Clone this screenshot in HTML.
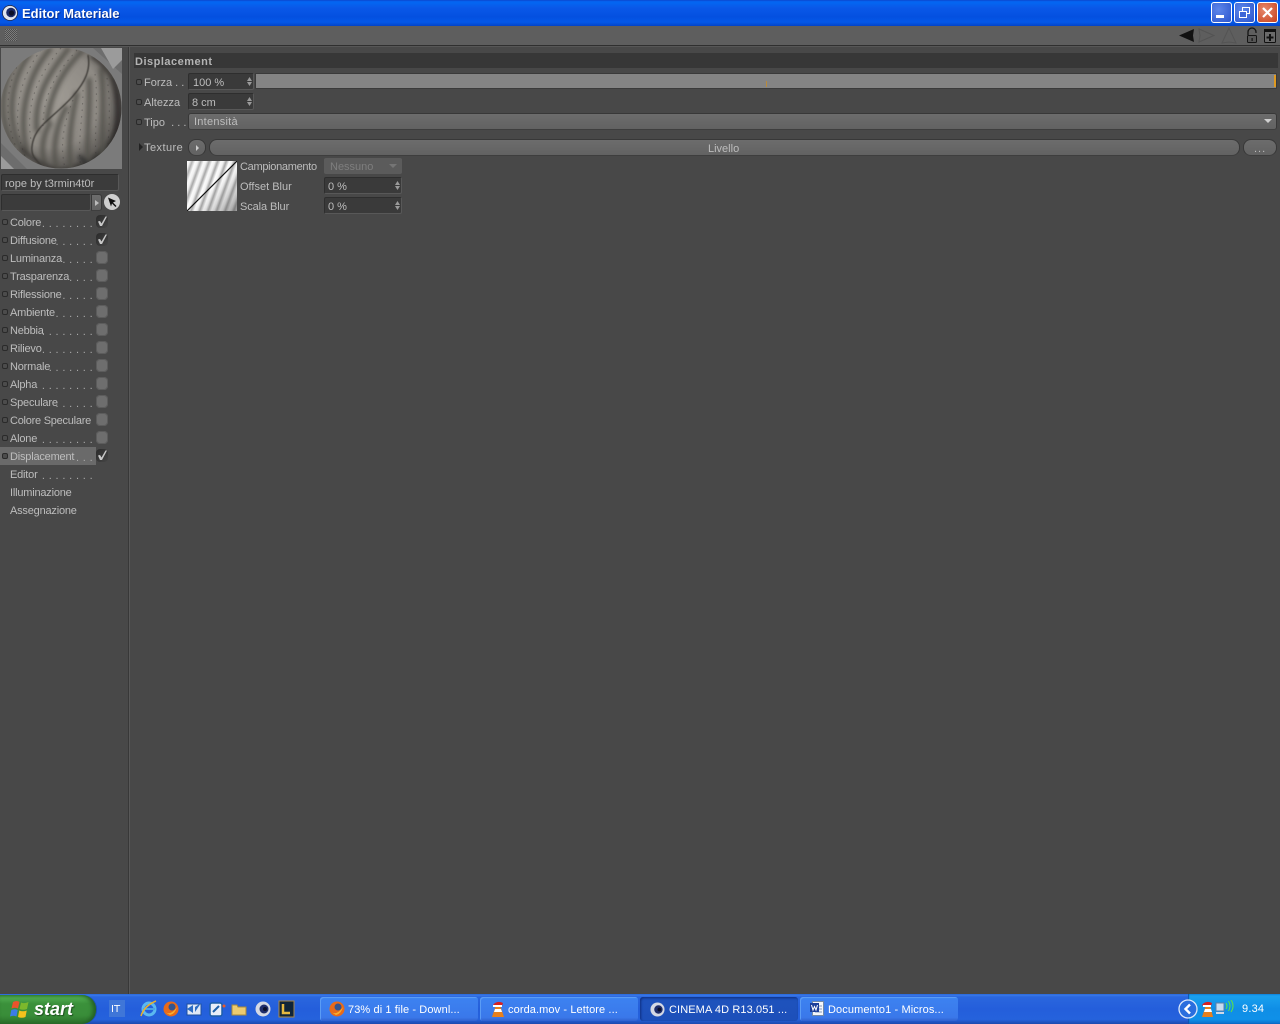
<!DOCTYPE html>
<html><head><meta charset="utf-8"><title>Editor Materiale</title>
<style>
html,body{margin:0;padding:0;width:1280px;height:1024px;overflow:hidden;background:#484848}
body{position:relative;font-family:"Liberation Sans",sans-serif;font-size:11px;color:#bdbdbd}
.a{position:absolute}
.t{position:absolute;white-space:pre;line-height:14px;height:14px;margin-top:1px}
.l{letter-spacing:-.2px}
.d{position:absolute;left:10px;width:83px;text-align:right;white-space:pre;line-height:14px;height:14px;margin-top:2px;letter-spacing:.35px;color:#aaa}
.dot{position:absolute;width:4px;height:4px;border:1px solid #2a2a2a;border-radius:2px;background:#4c4c4c}
.cb{position:absolute;left:96px;width:12px;height:13px;border-radius:4px;background:#6e6e6e;box-shadow:inset 0 0 0 1px #5c5c5c}
.cb.on{background:linear-gradient(135deg,#2a2a2a,#454545);box-shadow:none}
.cb.on svg{position:absolute;left:0;top:0}
.num{position:absolute;background:#3a3a3a;border:1px solid #2e2e2e;border-right-color:#585858;border-bottom-color:#585858;border-radius:2px;box-sizing:border-box}
.btn{position:absolute;box-sizing:border-box;background:linear-gradient(#6c6c6c,#626262);border:1px solid #383838;border-bottom-color:#3e3e3e}
.spin{position:absolute;width:5px;height:9px}
.tb{position:absolute;top:997px;height:24px;border-radius:3px;background:linear-gradient(#3f8cf3 0,#3c81f0 12%,#3a78ea 85%,#2f62cf 100%);box-sizing:border-box;color:#fff;font-size:11px;letter-spacing:.1px;line-height:24px;white-space:pre;box-shadow:inset 1px 1px 0 #5b9cf5}
.tb span{position:absolute;top:1px}
.tb svg{position:absolute}
</style></head><body>

<!-- title bar -->
<div class="a" style="left:0;top:0;width:1280px;height:26px;background:linear-gradient(#0a5ae6 0,#0466f2 10%,#0a58e8 30%,#0450e0 65%,#0458e8 85%,#0344c8 100%)"></div>
<div class="a" style="left:0;top:0;width:1280px;height:1px;background:#0a4fd8"></div>
<svg class="a" style="left:2px;top:5px" width="16" height="16" viewBox="0 0 16 16"><circle cx="8" cy="8" r="7.500" fill="#dfe4ee"/><circle cx="8" cy="8" r="7.500" fill="none" stroke="#223" stroke-width=".7"/><circle cx="9" cy="7.500" r="4.800" fill="#1b2a66"/><circle cx="9.500" cy="8" r="2.600" fill="#0b0f28"/></svg>
<div class="t" style="left:22px;top:5px;height:16px;line-height:16px;font-size:13px;font-weight:bold;color:#fff;text-shadow:1px 1px 0 #0a2f8f">Editor Materiale</div>
<!-- window buttons -->
<div class="a" style="left:1211px;top:2px;width:21px;height:21px;box-sizing:border-box;border:1px solid #fff;border-radius:3px;background:radial-gradient(circle at 35% 35%,#5d86ea,#2b55cd)"></div>
<div class="a" style="left:1216px;top:15px;width:8px;height:3px;background:#fff"></div>
<div class="a" style="left:1234px;top:2px;width:21px;height:21px;box-sizing:border-box;border:1px solid #fff;border-radius:3px;background:radial-gradient(circle at 35% 35%,#5d86ea,#2b55cd)"></div>
<svg class="a" style="left:1238px;top:6px" width="13" height="13" viewBox="0 0 13 13" fill="none" stroke="#fff"><rect x="4.500" y="1.500" width="7" height="6"/><rect x="1.500" y="5.500" width="7" height="6" fill="#3d66d8"/><path d="M1 5.500h8M4 1.500h8"/></svg>
<div class="a" style="left:1257px;top:2px;width:21px;height:21px;box-sizing:border-box;border:1px solid #fff;border-radius:3px;background:radial-gradient(circle at 35% 35%,#e6896c,#c8401c)"></div>
<svg class="a" style="left:1261px;top:6px" width="13" height="13" viewBox="0 0 13 13"><path d="M2 2l9 9M11 2l-9 9" stroke="#fff" stroke-width="2.200"/></svg>

<!-- toolbar -->
<div class="a" style="left:0;top:26px;width:1280px;height:19px;background:#5e5e5e"></div>
<div class="a" style="left:0;top:45px;width:1280px;height:1px;background:#2f2f2f"></div>
<div class="a" style="left:0;top:46px;width:1280px;height:1px;background:#565656"></div>
<div class="a" style="left:5px;top:29px;width:12px;height:12px;background-image:repeating-conic-gradient(#7c7c7c 0 25%,#4c4c4c 0 50%);background-size:2px 2px"></div>
<svg class="a" style="left:1176px;top:26px" width="104" height="19" viewBox="0 0 104 19">
<path d="M3 9.500L18 3L17 9.500L18 16Z" fill="#111"/>
<path d="M38 9.500L23 3L24 9.500L23 16Z" fill="#5e5e5e" stroke="#535353"/>
<path d="M53 2L46 17L53 16L60 17Z" fill="#5e5e5e" stroke="#545454"/>
<path d="M72 9V6a4 4 0 0 1 8 0v1" fill="none" stroke="#151515" stroke-width="1.300"/><rect x="71.500" y="9.500" width="9" height="7" rx="1" fill="#565656" stroke="#151515"/><rect x="75.500" y="12" width="1.200" height="3" fill="#151515"/>
<rect x="88.500" y="3.500" width="11" height="13" rx="1" fill="#6a6a6a" stroke="#111"/><rect x="88" y="3" width="12" height="3" fill="#111"/><path d="M94 8v7M90.500 11.500h7" stroke="#111" stroke-width="2"/>
</svg>

<!-- divider between sidebar and content -->
<div class="a" style="left:128px;top:47px;width:1px;height:948px;background:#383838"></div>
<div class="a" style="left:129px;top:47px;width:1px;height:948px;background:#585858"></div>

<!-- preview -->
<svg class="a" style="left:1px;top:48px" width="121" height="121" viewBox="0 0 121 121">
<defs>
<radialGradient id="sph" cx=".42" cy=".42" r=".62"><stop offset="0" stop-color="#a09c95"/><stop offset=".65" stop-color="#8e8a84"/><stop offset=".9" stop-color="#625f5b"/><stop offset="1" stop-color="#302f2c"/></radialGradient>
<clipPath id="c"><circle cx="60" cy="60" r="60.500"/></clipPath>
<filter id="bl" x="-30%" y="-30%" width="160%" height="160%"><feGaussianBlur stdDeviation="2"/></filter>
<filter id="bs"><feGaussianBlur stdDeviation=".4"/></filter>
</defs>
<rect width="121" height="121" fill="#7b7b7b"/>
<path d="M92 0H121L121 26ZM0 95L26 121H0Z" fill="#6d6d6d"/>
<path d="M100 0L121 0V12L112 21ZM0 108L13 121H0Z" fill="#9b9b9b"/>
<circle cx="60" cy="60" r="60.500" fill="url(#sph)"/>
<g clip-path="url(#c)">
<g filter="url(#bl)" fill="none" stroke="#55524e" stroke-width="5" opacity=".9">
<path d="M14 14C2 35 -4 65 12 100"/>
<path d="M30 4C10 30 2 70 24 110"/>
<path d="M50 0C28 25 16 65 26 104"/>
<path d="M68 0C48 25 32 50 36 84"/>
<path d="M82 2C64 20 50 42 46 74"/>
<path d="M76 44C72 65 66 90 70 122"/>
<path d="M66 58C56 75 50 100 56 122"/>
<path d="M50 74C42 85 38 105 46 120"/>
<path d="M88 30C90 60 84 95 88 122"/>
<path d="M100 20C104 50 100 90 102 115"/>
<path d="M112 30C120 50 118 85 110 108" stroke="#2e2c2a" stroke-width="6"/>
<path d="M90 8C102 14 112 28 118 45" stroke="#35332f" stroke-width="4"/>
<path d="M20 100C36 116 48 120 60 124" stroke="#3a3835" stroke-width="4"/>
<path d="M78 108C84 114 92 120 100 124" stroke="#333" stroke-width="5"/>
</g>
<path d="M87 7C90 22 84 34 72 48C60 62 42 74 36 84C31 92 29 103 33 109C36 113 39 117 44 120" fill="none" stroke="#3a3834" stroke-width="1.300" filter="url(#bs)"/>
<g fill="none" stroke="#2c2a28" stroke-width="1" stroke-dasharray="1.500 5" opacity=".35">
<path d="M22 8C6 32 0 68 18 106"/><path d="M40 2C20 28 8 68 24 108"/><path d="M60 0C38 26 24 55 30 92"/><path d="M76 2C56 24 42 46 42 78"/><path d="M72 52C64 72 58 95 64 120"/><path d="M82 42C82 70 76 95 80 120"/><path d="M94 26C98 55 92 90 96 118"/><path d="M106 30C110 55 108 85 106 110"/>
</g>
</g>
</svg>

<!-- material name -->
<div class="num" style="left:1px;top:174px;width:118px;height:17px;background:#3b3b3b"></div>
<div class="t" style="left:5px;top:176px">rope by t3rmin4t0r</div>
<div class="num" style="left:1px;top:194px;width:90px;height:17px;background:#3b3b3b"></div>
<div class="btn" style="left:91px;top:194px;width:11px;height:17px;border-radius:0 3px 3px 0"></div>
<div class="a" style="left:95px;top:200px;border-left:4px solid #bbb;border-top:3px solid transparent;border-bottom:3px solid transparent"></div>
<svg class="a" style="left:103px;top:193px" width="18" height="18" viewBox="0 0 18 18"><circle cx="9" cy="9" r="8" fill="#cfcfcf"/><path d="M5 4.500L13 8L10 9.500L13.500 13L12.500 14L9 10.500L8 13.500Z" fill="#111"/></svg>

<!-- channel list -->
<div class="a" style="left:0;top:447px;width:96px;height:18px;background:#6a6a6a"></div>

<i class="dot" style="left:2px;top:219px"></i><div class="t l" style="left:10px;top:215px">Colore</div><div class="d" style="top:215px">. . . . . . . .</div><div class="cb on" style="top:215px"><svg width="12" height="13"><path d="M2 6.500L4 6L5.500 8.500L9.500 1.500H11L6 11H4Z" fill="#c8c8c8"/></svg></div>
<i class="dot" style="left:2px;top:237px"></i><div class="t l" style="left:10px;top:233px">Diffusione</div><div class="d" style="top:233px">. . . . . .</div><div class="cb on" style="top:233px"><svg width="12" height="13"><path d="M2 6.500L4 6L5.500 8.500L9.500 1.500H11L6 11H4Z" fill="#c8c8c8"/></svg></div>
<i class="dot" style="left:2px;top:255px"></i><div class="t l" style="left:10px;top:251px">Luminanza</div><div class="d" style="top:251px">. . . . .</div><div class="cb" style="top:251px"></div>
<i class="dot" style="left:2px;top:273px"></i><div class="t l" style="left:10px;top:269px">Trasparenza</div><div class="d" style="top:269px">. . . .</div><div class="cb" style="top:269px"></div>
<i class="dot" style="left:2px;top:291px"></i><div class="t l" style="left:10px;top:287px">Riflessione</div><div class="d" style="top:287px">. . . . .</div><div class="cb" style="top:287px"></div>
<i class="dot" style="left:2px;top:309px"></i><div class="t l" style="left:10px;top:305px">Ambiente</div><div class="d" style="top:305px">. . . . . .</div><div class="cb" style="top:305px"></div>
<i class="dot" style="left:2px;top:327px"></i><div class="t l" style="left:10px;top:323px">Nebbia</div><div class="d" style="top:323px">. . . . . . . .</div><div class="cb" style="top:323px"></div>
<i class="dot" style="left:2px;top:345px"></i><div class="t l" style="left:10px;top:341px">Rilievo</div><div class="d" style="top:341px">. . . . . . . .</div><div class="cb" style="top:341px"></div>
<i class="dot" style="left:2px;top:363px"></i><div class="t l" style="left:10px;top:359px">Normale</div><div class="d" style="top:359px">. . . . . . .</div><div class="cb" style="top:359px"></div>
<i class="dot" style="left:2px;top:381px"></i><div class="t l" style="left:10px;top:377px">Alpha</div><div class="d" style="top:377px">. . . . . . . .</div><div class="cb" style="top:377px"></div>
<i class="dot" style="left:2px;top:399px"></i><div class="t l" style="left:10px;top:395px">Speculare</div><div class="d" style="top:395px">. . . . . .</div><div class="cb" style="top:395px"></div>
<i class="dot" style="left:2px;top:417px"></i><div class="t" style="left:10px;top:413px;letter-spacing:-.25px">Colore Speculare</div><div class="cb" style="top:413px"></div>
<i class="dot" style="left:2px;top:435px"></i><div class="t l" style="left:10px;top:431px">Alone</div><div class="d" style="top:431px">. . . . . . . .</div><div class="cb" style="top:431px"></div>
<i class="dot" style="left:2px;top:453px"></i><div class="t l" style="left:10px;top:449px">Displacement</div><div class="d" style="top:449px">. . .</div><div class="cb on" style="top:449px"><svg width="12" height="13"><path d="M2 6.500L4 6L5.500 8.500L9.500 1.500H11L6 11H4Z" fill="#c8c8c8"/></svg></div>
<div class="t l" style="left:10px;top:467px">Editor</div><div class="d" style="top:467px">. . . . . . . .</div>
<div class="t l" style="left:10px;top:485px">Illuminazione</div>
<div class="t l" style="left:10px;top:503px">Assegnazione</div>

<!-- section header -->
<div class="a" style="left:134px;top:53px;width:1144px;height:15px;background:#373737"></div>
<div class="t" style="left:135px;top:54px;font-weight:bold;color:#b4b4b4;letter-spacing:.5px">Displacement</div>

<!-- Forza -->
<i class="dot" style="left:136px;top:79px"></i><div class="t" style="left:144px;top:75px">Forza . .</div>
<div class="num" style="left:188px;top:73px;width:66px;height:17px"></div><div class="t" style="left:193px;top:75px">100 %</div>
<svg class="spin" style="left:247px;top:77px" viewBox="0 0 5 9"><path d="M0 4L2.500 0L5 4ZM0 5L2.500 9L5 5Z" fill="#9a9a9a"/></svg>
<div class="a" style="left:255px;top:73px;width:1022px;height:16px;box-sizing:border-box;background:#848484;border:1px solid #3a3a3a;border-radius:1px"></div>
<div class="a" style="left:766px;top:81px;width:1px;height:6px;background:#b98a3a"></div>
<div class="a" style="left:1274px;top:75px;width:2px;height:12px;background:#e09a20"></div>

<!-- Altezza -->
<i class="dot" style="left:136px;top:99px"></i><div class="t" style="left:144px;top:95px">Altezza</div>
<div class="num" style="left:188px;top:93px;width:66px;height:17px"></div><div class="t" style="left:192px;top:95px">8 cm</div>
<svg class="spin" style="left:247px;top:97px" viewBox="0 0 5 9"><path d="M0 4L2.500 0L5 4ZM0 5L2.500 9L5 5Z" fill="#9a9a9a"/></svg>

<!-- Tipo -->
<i class="dot" style="left:136px;top:119px"></i><div class="t" style="left:144px;top:115px">Tipo  . . .</div>
<div class="btn" style="left:188px;top:113px;width:1089px;height:17px;border-radius:3px"></div><div class="t" style="left:194px;top:114px;letter-spacing:.25px">Intensità</div>
<div class="a" style="left:1264px;top:119px;border-top:4px solid #d0d0d0;border-left:4px solid transparent;border-right:4px solid transparent"></div>

<!-- Texture -->
<div class="a" style="left:139px;top:143px;border-left:4px solid #222;border-top:4px solid transparent;border-bottom:4px solid transparent"></div>
<div class="t" style="left:144px;top:140px;letter-spacing:.45px">Texture</div>
<div class="btn" style="left:188px;top:139px;width:18px;height:17px;border-radius:8px"></div>
<div class="a" style="left:196px;top:145px;border-left:3px solid #ccc;border-top:3px solid transparent;border-bottom:3px solid transparent"></div>
<div class="btn" style="left:209px;top:139px;width:1031px;height:17px;border-radius:8px"></div>
<div class="t" style="left:708px;top:141px">Livello</div>
<div class="btn" style="left:1243px;top:139px;width:34px;height:17px;border-radius:8px"></div>
<div class="t" style="left:1254px;top:141px;letter-spacing:1px">...</div>

<!-- Texture preview -->
<svg class="a" style="left:187px;top:161px" width="50" height="50" viewBox="0 0 50 50">
<defs><linearGradient id="st" x1="0" y1="0" x2="1" y2="0" spreadMethod="repeat" gradientUnits="userSpaceOnUse" gradientTransform="rotate(20) scale(8 8)"><stop offset="0" stop-color="#ffffff"/><stop offset=".3" stop-color="#f4f4f4"/><stop offset=".62" stop-color="#a6a6a6"/><stop offset="1" stop-color="#ffffff"/></linearGradient>
<linearGradient id="sh" x1="0" y1="0" x2="1" y2="1"><stop offset="0" stop-color="#fff" stop-opacity=".2"/><stop offset=".5" stop-color="#888" stop-opacity="0"/><stop offset="1" stop-color="#444" stop-opacity=".5"/></linearGradient></defs>
<rect width="50" height="50" fill="url(#st)"/>
<rect width="50" height="50" fill="url(#sh)"/>
<path d="M0 50L50 0" stroke="#111" stroke-width="1.200"/>
</svg>

<div class="t" style="left:240px;top:159px;letter-spacing:-.3px">Campionamento</div>
<div class="a" style="left:324px;top:158px;width:78px;height:16px;border-radius:2px;background:#5b5b5b"></div>
<div class="t" style="left:330px;top:159px;color:#7e7e7e">Nessuno</div>
<div class="a" style="left:389px;top:164px;border-top:4px solid #757575;border-left:4px solid transparent;border-right:4px solid transparent"></div>

<div class="t" style="left:240px;top:179px">Offset Blur</div>
<div class="num" style="left:324px;top:177px;width:78px;height:17px"></div><div class="t" style="left:328px;top:179px">0 %</div>
<svg class="spin" style="left:395px;top:181px" viewBox="0 0 5 9"><path d="M0 4L2.500 0L5 4ZM0 5L2.500 9L5 5Z" fill="#9a9a9a"/></svg>

<div class="t" style="left:240px;top:199px;letter-spacing:-.1px">Scala Blur</div>
<div class="num" style="left:324px;top:197px;width:78px;height:17px"></div><div class="t" style="left:328px;top:199px">0 %</div>
<svg class="spin" style="left:395px;top:201px" viewBox="0 0 5 9"><path d="M0 4L2.500 0L5 4ZM0 5L2.500 9L5 5Z" fill="#9a9a9a"/></svg>

<!-- taskbar -->
<div class="a" style="left:0;top:994px;width:1280px;height:30px;background:linear-gradient(#1f5cd0 0,#3a7bea 3%,#2a66de 10%,#245edb 50%,#2562dc 85%,#1c49ad 100%)"></div>
<!-- start -->
<div class="a" style="left:0;top:995px;width:96px;height:29px;border-radius:0 14px 14px 0/0 14px 14px 0;background:linear-gradient(#3f9a3f 0,#4faa4f 10%,#3b913b 30%,#398d39 70%,#2a6f2a 100%);box-shadow:inset -3px 0 4px #245f24, 1px 0 0 #1a4fb0"></div>
<svg class="a" style="left:10px;top:1000px" width="20" height="19" viewBox="0 0 20 19"><path d="M3 2Q7 0 9.500 2L8 8.500Q5 7 1.500 8.500Z" fill="#e8542c"/><path d="M11 2.500Q14 4 18.500 2L17 9Q13 10.500 9.500 9Z" fill="#7cb82c"/><path d="M1.300 10Q5 8.500 7.700 10L6.500 16.500Q3.500 15 0 16.500Z" fill="#3c7ce8"/><path d="M9.200 10.500Q13 12 16.700 10.500L15.500 17Q11.500 18.500 8 17Z" fill="#f4c21c"/></svg>
<div class="t" style="left:34px;top:999px;margin-top:0;height:20px;line-height:20px;font-size:18px;font-weight:bold;font-style:italic;color:#fff;text-shadow:1px 1px 1px #1d4f1d">start</div>
<!-- language -->
<div class="a" style="left:109px;top:1000px;width:16px;height:17px;background:#3f76d8"></div>
<div class="t" style="left:111px;top:1002px;color:#fff;font-family:'DejaVu Sans',sans-serif;font-size:10px">IT</div>
<!-- quick launch -->
<svg class="a" style="left:140px;top:1000px" width="156" height="18" viewBox="0 0 156 18">
<circle cx="9" cy="9" r="6" fill="none" stroke="#5bb8f0" stroke-width="3"/><path d="M3 9h12" stroke="#4aa4e8" stroke-width="2"/><path d="M1 16Q4 6 16 1" fill="none" stroke="#e8b030" stroke-width="1.500"/>
<circle cx="31" cy="9" r="7.500" fill="#e86a1a"/><circle cx="32" cy="7" r="3.500" fill="#34548f"/><path d="M25 12Q31 16 37 7Q35 14 30 15Z" fill="#f8b030"/>
<rect x="47" y="4" width="14" height="11" fill="#dfe8f6" stroke="#1d4f9f"/><path d="M47 9L53 5V13ZM61 3L55 7V12Z" fill="#2b6cc4"/>
<rect x="70" y="3" width="12" height="13" rx="2" fill="#e8eef8" stroke="#1d5fa8" stroke-width="1.500"/><path d="M73 12L79 6" stroke="#1d5fa8" stroke-width="2"/><circle cx="84" cy="6" r="1.500" fill="#e85a2a"/>
<path d="M92 5h5l1 2h8v8H92Z" fill="#eccb70" stroke="#a88a3a"/>
<circle cx="123" cy="9" r="7.500" fill="#d5d9e4"/><circle cx="124" cy="9" r="4.500" fill="#1f2d6a"/><circle cx="125" cy="9" r="2" fill="#0a0f2a"/>
<rect x="139" y="1" width="15" height="16" fill="#0f2438" stroke="#a8884a"/><path d="M143 4v9h7" fill="none" stroke="#e4b840" stroke-width="2.500"/>
</svg>

<!-- task buttons -->
<div class="tb" style="left:320px;width:158px"><svg style="left:9px;top:4px" width="16" height="16" viewBox="0 0 16 16"><circle cx="8" cy="8" r="7.500" fill="#e86a1a"/><circle cx="9" cy="6" r="3.500" fill="#34548f"/><path d="M2 11Q8 15 14 6Q12 13 7 14Z" fill="#f8b030"/></svg><span style="left:28px">73% di 1 file - Downl...</span></div>
<div class="tb" style="left:480px;width:158px"><svg style="left:11px;top:3px" width="14" height="18" viewBox="0 0 14 18"><path d="M5 5h4l4 12H1Z" fill="#e8801c"/><path d="M4 9h6l1 3H3Z" fill="#fff"/><path d="M2 5Q6 0 12 3L11 6H3Z" fill="#d82020"/><rect x="2" y="5" width="9" height="2" fill="#fff"/></svg><span style="left:28px">corda.mov - Lettore ...</span></div>
<div class="tb" style="left:640px;width:158px;background:linear-gradient(#1a4fb8 0,#1e52bc 15%,#1d50ba 100%);box-shadow:inset 1px 1px 2px #0f2f80"><svg style="left:10px;top:5px" width="15" height="15" viewBox="0 0 16 16"><circle cx="8" cy="8" r="7.500" fill="#d5d9e4"/><circle cx="9" cy="8" r="4.500" fill="#1f2d6a"/><circle cx="10" cy="8" r="2" fill="#0a0f2a"/></svg><span style="left:29px;top:1px">CINEMA 4D R13.051 ...</span></div>
<div class="tb" style="left:800px;width:158px"><svg style="left:9px;top:3px" width="16" height="17" viewBox="0 0 16 17"><rect x="3.500" y="1.500" width="11" height="14" fill="#f4f6fa" stroke="#7088a8"/><path d="M6 6h7M6 9h7M6 12h7" stroke="#8098c0"/><rect x="1" y="3" width="9" height="9" fill="#1c3f9a"/><path d="M2.500 5L4 10L5.500 6.500L7 10L8.500 5" fill="none" stroke="#fff"/></svg><span style="left:28px">Documento1 - Micros...</span></div>

<!-- tray -->
<div class="a" style="left:1188px;top:994px;width:92px;height:30px;background:linear-gradient(#1290e6 0,#1aa0ee 8%,#0f8ee6 50%,#0f90e8 85%,#0d6cc8 100%);box-shadow:inset 1px 0 1px #0d4fa8"></div>
<svg class="a" style="left:1178px;top:999px" width="20" height="20" viewBox="0 0 20 20"><circle cx="10" cy="10" r="9" fill="#2a6ede" stroke="#dbe8fa" stroke-width="1.300"/><path d="M12 5.500L7.500 10L12 14.500" fill="none" stroke="#fff" stroke-width="2.400"/></svg>
<svg class="a" style="left:1201px;top:1000px" width="34" height="18" viewBox="0 0 34 18"><path d="M5 5h4l3 12H1Z" fill="#e8801c"/><path d="M4 9h6l1 3H3Z" fill="#fff"/><path d="M1 5Q5 0 11 3L10 6H2Z" fill="#d82020"/><rect x="2" y="5" width="8" height="2" fill="#fff"/><rect x="15" y="3" width="8" height="8" fill="#c8dcf0" stroke="#5a7ea8"/><rect x="15" y="12" width="8" height="2" fill="#d0d8e8"/><path d="M25 3Q27 6 25 9M27.500 1Q30.500 6 27.500 11M30 0Q34 6 30 12" fill="none" stroke="#5ce04a" stroke-width="1.100"/></svg>
<div class="t" style="left:1242px;top:1001px;color:#fff;font-size:11px;letter-spacing:.2px">9.34</div>
</body></html>
